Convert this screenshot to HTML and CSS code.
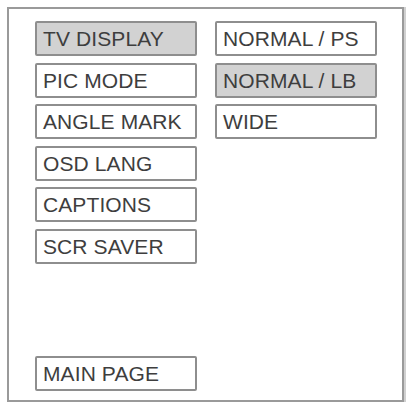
FILE: index.html
```html
<!DOCTYPE html>
<html>
<head>
<meta charset="utf-8">
<link rel="stylesheet" href="styles.css">
</head>
<body>
<div class="frame">
  <div class="col">
    <div class="item selected">TV DISPLAY</div>
    <div class="item">PIC MODE</div>
    <div class="item">ANGLE MARK</div>
    <div class="item">OSD LANG</div>
    <div class="item">CAPTIONS</div>
    <div class="item">SCR SAVER</div>
    <div class="item bottom">MAIN PAGE</div>
  </div>
  <div class="col">
    <div class="item">NORMAL / PS</div>
    <div class="item selected">NORMAL / LB</div>
    <div class="item">WIDE</div>
  </div>
</div>
</body>
</html>
```

FILE: styles.css
```css
html, body {
  margin: 0;
  padding: 0;
  background: #ffffff;
}
body {
  padding: 7px 0 0 7px;
}
.frame {
  box-sizing: border-box;
  width: 397px;
  height: 395px;
  border: 2px solid #9a9a9a;
  box-shadow: 2px 0 0 #d0d0d0;
  padding: 12px 0 9px 26px;
  display: flex;
  gap: 18px;
  background: #fff;
}
.col {
  display: flex;
  flex-direction: column;
  gap: 6.6px;
  width: 162px;
}
.item {
  box-sizing: border-box;
  height: 35px;
  border: 2px solid #8e8e8e;
  border-radius: 2px;
  padding: 1px 0 0 6px;
  display: flex;
  align-items: center;
  font-family: "Liberation Sans", Arial, sans-serif;
  font-size: 21px;
  letter-spacing: 0.1px;
  color: #3e3e3e;
  background: #fff;
  white-space: nowrap;
}
.selected {
  background: #d2d2d2;
}
.bottom {
  margin-top: auto;
}
```
